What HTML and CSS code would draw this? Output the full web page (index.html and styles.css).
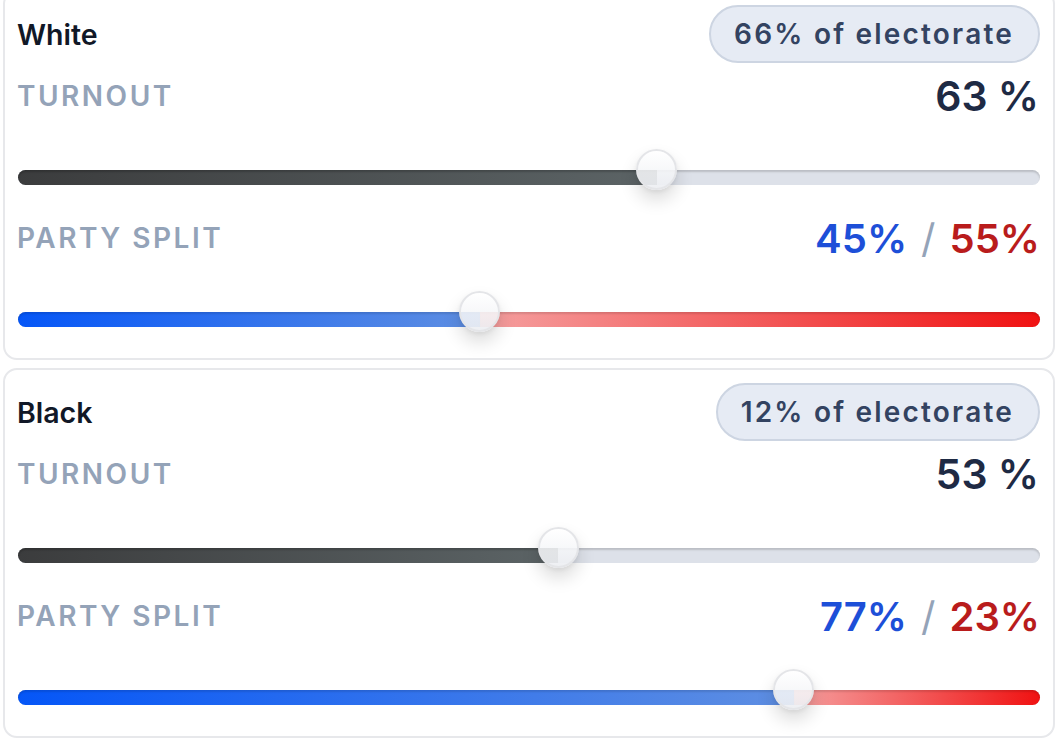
FILE: index.html
```html
<!DOCTYPE html>
<html>
<head>
<meta charset="utf-8">
<link rel="stylesheet" href="styles.css">
</head>
<body>
<div class="list">
  <section class="card">
    <div class="head">
      <span class="group">White</span>
      <span class="badge">66% of electorate</span>
    </div>
    <div class="row">
      <span class="label">TURNOUT</span>
      <span class="value">63 %</span>
    </div>
    <div class="track turnout">
      <div class="fill" style="width: calc(20.5px + 0.63 * (100% - 41px))"></div>
      <div class="thumb" style="left: calc(0.63 * (100% - 41px))"></div>
    </div>
    <div class="row">
      <span class="label">PARTY SPLIT</span>
      <span class="split"><span class="dem">45%</span><span class="sep">/</span><span class="rep">55%</span></span>
    </div>
    <div class="track party">
      <div class="fill" style="width: calc(20.5px + 0.45 * (100% - 41px))"></div>
      <div class="rest"></div>
      <div class="thumb" style="left: calc(0.45 * (100% - 41px))"></div>
    </div>
  </section>
  <section class="card">
    <div class="head">
      <span class="group">Black</span>
      <span class="badge">12% of electorate</span>
    </div>
    <div class="row">
      <span class="label">TURNOUT</span>
      <span class="value">53 %</span>
    </div>
    <div class="track turnout">
      <div class="fill" style="width: calc(20.5px + 0.53 * (100% - 41px))"></div>
      <div class="thumb" style="left: calc(0.53 * (100% - 41px))"></div>
    </div>
    <div class="row">
      <span class="label">PARTY SPLIT</span>
      <span class="split"><span class="dem">77%</span><span class="sep">/</span><span class="rep">23%</span></span>
    </div>
    <div class="track party">
      <div class="fill" style="width: calc(20.5px + 0.77 * (100% - 41px))"></div>
      <div class="rest"></div>
      <div class="thumb" style="left: calc(0.77 * (100% - 41px))"></div>
    </div>
  </section>
</div>
</body>
</html>
```

FILE: styles.css
```css
* { box-sizing: border-box; }
html, body { margin: 0; padding: 0; background: #ffffff; }
body {
  font-family: Inter, "Noto Sans", "Liberation Sans", sans-serif;
  overflow: hidden;
}
.list {
  margin-top: -10px;
  padding: 0 3px;
  display: flex;
  flex-direction: column;
  gap: 8px;
}
.card {
  background: #fff;
  border: 2px solid #e7e8eb;
  border-radius: 14px;
  padding: 13px 13px 31px 12px;
  display: flex;
  flex-direction: column;
}
.head {
  height: 58px;
  display: flex;
  align-items: center;
  justify-content: space-between;
}
.group {
  font-size: 28.5px;
  font-weight: 600;
  color: #111827;
}
.badge {
  height: 58px;
  display: flex;
  align-items: center;
  padding: 0 24px 0 23px;
  border: 2px solid #cdd5e2;
  background: #e6ebf4;
  border-radius: 29px;
  font-size: 28px;
  font-weight: 600;
  color: #334361;
  letter-spacing: 2.2px;
}
.row {
  height: 48px;
  margin-top: 9px;
  display: flex;
  align-items: center;
  justify-content: space-between;
}
.track + .row { margin-top: 29px; }
.label {
  font-size: 28px;
  font-weight: 600;
  letter-spacing: 2.5px;
  color: #94a3b8;
}
.value {
  font-size: 41px;
  font-weight: 600;
  color: #1e2a44;
  margin-right: 1px;
}
.split {
  font-size: 40px;
  font-weight: 600;
  display: flex;
  align-items: center;
}
.dem { color: #1d4fd8; }
.rep { color: #b91c1c; }
.sep {
  color: #94a3b8;
  font-weight: 400;
  margin: 0 14px;
}
.track {
  position: relative;
  height: 15px;
  margin-top: 50px;
  margin-left: 1px;
  border-radius: 8px;
  background: #dde1e9;
  box-shadow: inset 0 2px 2px rgba(0, 0, 0, 0.16);
  display: flex;
}
.track .fill {
  height: 100%;
  border-radius: 8px 0 0 8px;
}
.turnout .fill {
  background: linear-gradient(90deg, #3b3c3d, #5c6466);
  box-shadow: inset 0 2px 2px rgba(0, 0, 0, 0.2);
}
.party .fill {
  background: linear-gradient(90deg, #0556f7, #5f8fe2);
  box-shadow: inset 0 2px 2px rgba(0, 0, 0, 0.12);
}
.party .rest {
  flex: 1;
  height: 100%;
  border-radius: 0 8px 8px 0;
  background: linear-gradient(90deg, #f5a0a0, #f01212);
  box-shadow: inset 0 2px 2px rgba(0, 0, 0, 0.12);
}
.thumb {
  position: absolute;
  top: -21px;
  width: 41px;
  height: 41px;
  border-radius: 50%;
  border: 2px solid #e4e5e8;
  background: linear-gradient(180deg, rgba(255,255,255,0.9) 0%, rgba(246,247,249,0.88) 50%, rgba(236,238,242,0.92) 100%);
  box-shadow: 0 10px 18px rgba(0, 0, 0, 0.14), 0 2px 4px rgba(0, 0, 0, 0.06);
}
```
